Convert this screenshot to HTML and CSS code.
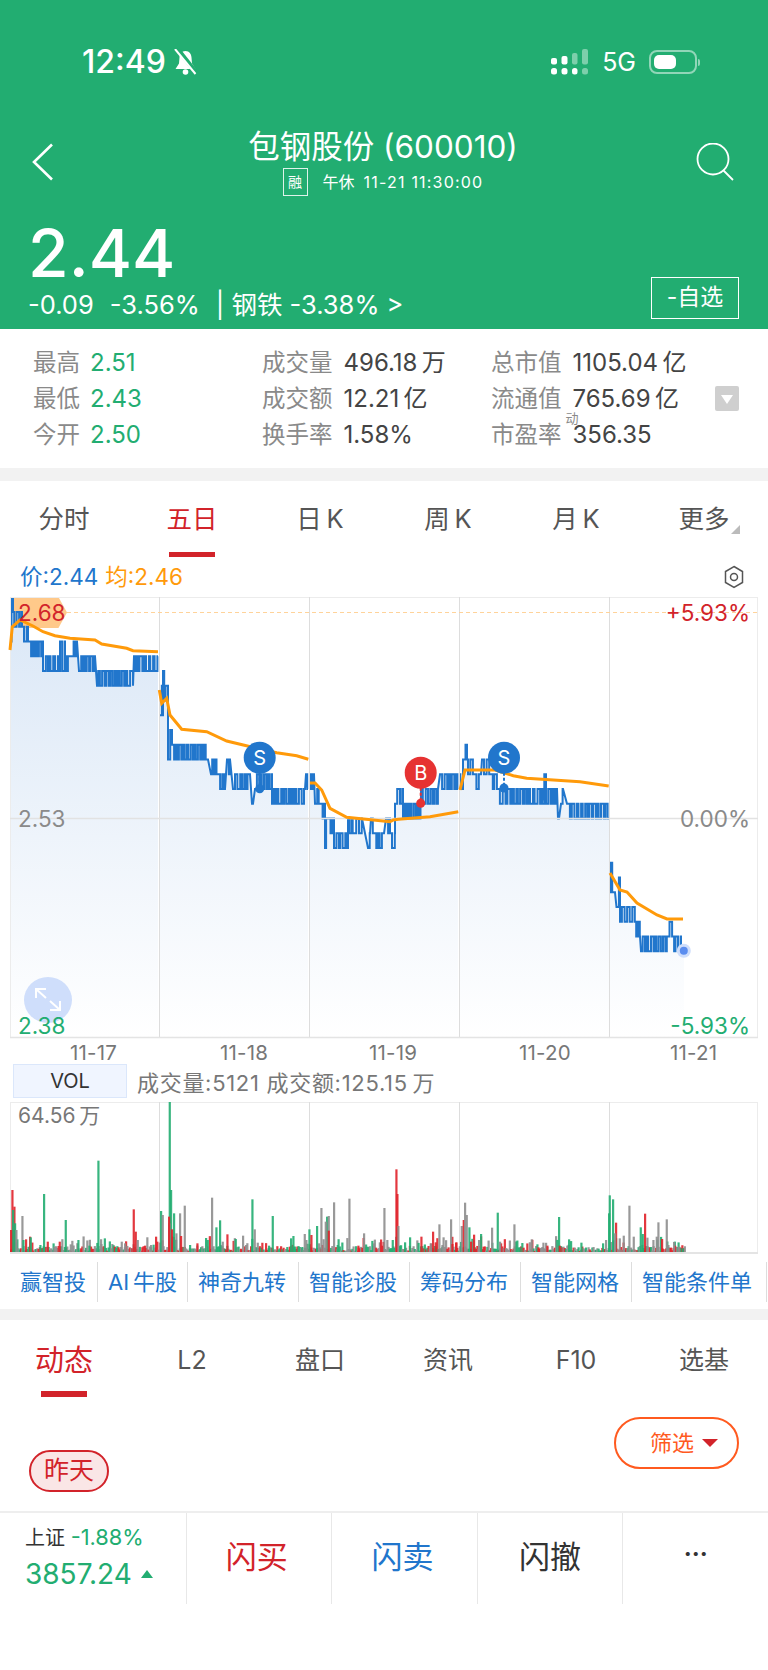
FILE: index.html
```html
<!DOCTYPE html>
<html>
<head>
    <meta charset="UTF-8">
    <title>包钢股份 (600010)</title>
    <link rel="stylesheet" href="styles.css">
</head>
<body>
    <div class="header">
        <div class="status-bar">
            <div class="status-left">
                <span class="clock">12:49</span>
                <svg class="bell" width="23" height="26" viewBox="0 0 23 26">
                    <path d="M11.500 2c-4 0-5.800 3-6 6.500L5 14.500 1.500 20h20L18 14.500l-.5-6C17.300 5 15.500 2 11.500 2z" fill="#fff"/>
                    <circle cx="11.500" cy="23" r="2.800" fill="#fff"/>
                    <path d="M3.500 0l19 24" stroke="#22ad71" stroke-width="4.500"/>
                    <path d="M1 0l20.500 25" stroke="#fff" stroke-width="2"/>
                </svg>
            </div>
            <div class="status-right">
                <svg class="signal" width="37" height="26" viewBox="0 0 37 26">
                    <rect x="0" y="9" width="6" height="6.500" rx="2" fill="#fff"/>
                    <rect x="10.500" y="7" width="6" height="8.500" rx="2" fill="#fff"/>
                    <rect x="21" y="4" width="5.500" height="11.500" rx="2" fill="#7dcfab"/>
                    <rect x="31" y="0" width="6" height="15.500" rx="2" fill="#7dcfab"/>
                    <rect x="0" y="19" width="6" height="6.500" rx="2.500" fill="#fff"/>
                    <rect x="10.500" y="19" width="6" height="6.500" rx="2.500" fill="#fff"/>
                    <rect x="21" y="19" width="5.500" height="6.500" rx="2.500" fill="#fff"/>
                    <rect x="31" y="19" width="6" height="6.500" rx="2.500" fill="#7dcfab"/>
                </svg>
                <span class="net">5G</span>
                <div class="battery"><div class="battery-level"></div></div>
                <div class="battery-tip"></div>
            </div>
        </div>
        <div class="title-bar">
            <svg class="icon-back" width="22" height="38" viewBox="0 0 22 38">
                <path d="M20 1.500L2 19l18 17.500" fill="none" stroke="#fff" stroke-width="2.600"/>
            </svg>
            <div class="title-mid">
                <div class="title">包钢股份 (600010)</div>
                <div class="subtitle">
                    <span class="rong">融</span>
                    <span>午休&nbsp;&nbsp;<span class="stamp">11-21 11:30:00</span></span>
                </div>
            </div>
            <svg class="icon-search" width="38" height="38" viewBox="0 0 38 38">
                <circle cx="17" cy="16" r="15.500" fill="none" stroke="#fff" stroke-width="1.800"/>
                <path d="M27 27l10 10" stroke="#fff" stroke-width="1.800"/>
            </svg>
        </div>
        <div class="quote">
            <div>
                <div class="price">2.44</div>
                <div class="change">
                    <span>-0.09</span>
                    <span>-3.56%</span>
                    <span>| 钢铁 -3.38% &gt;</span>
                </div>
            </div>
            <div class="fav">-自选</div>
        </div>
    </div>

    <div class="stats">
        <div class="stat-col col-a">
            <div class="stat"><span class="label">最高</span><span class="val green">2.51</span></div>
            <div class="stat"><span class="label">最低</span><span class="val green">2.43</span></div>
            <div class="stat"><span class="label">今开</span><span class="val green">2.50</span></div>
        </div>
        <div class="stat-col col-b">
            <div class="stat"><span class="label">成交量</span><span class="val">496.18&thinsp;万</span></div>
            <div class="stat"><span class="label">成交额</span><span class="val">12.21&thinsp;亿</span></div>
            <div class="stat"><span class="label">换手率</span><span class="val">1.58%</span></div>
        </div>
        <div class="stat-col col-c">
            <div class="stat"><span class="label">总市值</span><span class="val">1105.04&thinsp;亿</span></div>
            <div class="stat"><span class="label">流通值</span><span class="val">765.69&thinsp;亿</span></div>
            <div class="stat"><span class="label">市盈率<sup class="dyn">动</sup></span><span class="val">356.35</span></div>
        </div>
        <div class="expand"><span class="expand-arrow"></span></div>
    </div>

    <div class="band"></div>

    <div class="chart-tabs">
        <div class="tab">分时</div>
        <div class="tab active">五日</div>
        <div class="tab">日&thinsp;K</div>
        <div class="tab">周&thinsp;K</div>
        <div class="tab">月&thinsp;K</div>
        <div class="tab more">更多</div>
    </div>

    <div class="legend">
        <span class="blue">价:2.44</span>
        <span class="orange">均:2.46</span>
        <svg class="icon-hex" width="22" height="24" viewBox="0 0 22 24">
            <path d="M11 1.500l8.500 5v11l-8.500 5-8.500-5v-11z" fill="none" stroke="#555" stroke-width="1.500"/>
            <circle cx="11" cy="12" r="3.500" fill="none" stroke="#555" stroke-width="1.500"/>
        </svg>
    </div>

    <div class="chart">
        <svg id="priceChart" width="768" height="444"></svg>
        <div class="hi-tag"></div>
        <span class="axis red hi-left">2.68</span>
        <span class="axis red hi-right">+5.93%</span>
        <span class="axis grey mid-left">2.53</span>
        <span class="axis grey mid-right">0.00%</span>
        <div class="zoom-btn">
            <svg width="28" height="25" viewBox="0 0 28 25">
                <path d="M2 11V2h10M2 2l10 9M26 14v9H16M26 23l-10-9" fill="none" stroke="#fff" stroke-width="2"/>
            </svg>
        </div>
        <span class="axis green lo-left">2.38</span>
        <span class="axis green lo-right">-5.93%</span>
    </div>

    <div class="dates">
        <span>11-17</span>
        <span>11-18</span>
        <span>11-19</span>
        <span>11-20</span>
        <span>11-21</span>
    </div>

    <div class="vol-row">
        <div class="vol-btn">VOL</div>
        <div class="vol-text">成交量:5121 成交额:125.15&thinsp;万</div>
    </div>

    <div class="chart vol-chart">
        <svg id="volChart" width="768" height="152"></svg>
        <span class="vol-max">64.56&thinsp;万</span>
    </div>

    <div class="tools">
        <span>赢智投</span>
        <span>AI&thinsp;牛股</span>
        <span>神奇九转</span>
        <span>智能诊股</span>
        <span>筹码分布</span>
        <span>智能网格</span>
        <span>智能条件单</span>
    </div>

    <div class="band band-small"></div>

    <div class="news-tabs">
        <div class="news-tab active">动态</div>
        <div class="news-tab">L2</div>
        <div class="news-tab">盘口</div>
        <div class="news-tab">资讯</div>
        <div class="news-tab">F10</div>
        <div class="news-tab">选基</div>
    </div>

    <div class="feed">
        <div class="yesterday">昨天</div>
        <div class="filter">筛选<span class="filter-arrow"></span></div>
    </div>

    <div class="bottom-bar">
        <div class="index-cell">
            <div class="index-top"><span>上证</span> <span class="index-pct green">-1.88%</span></div>
            <div class="index-val green">3857.24<span class="up-arrow"></span></div>
        </div>
        <div class="action red">闪买</div>
        <div class="action blue">闪卖</div>
        <div class="action">闪撤</div>
        <div class="action dots">···</div>
    </div>

    <script src="chart.js"></script>
</body>
</html>
```

FILE: styles.css
```css
:root {
    --green: #22ad71;
    --red: #d2232a;
    --blue: #2176cc;
    --orange: #ff9a0a;
    --band: #f2f2f2;
    --label: #8a8a8a;
    --text: #444;
}

* {
    box-sizing: border-box;
    margin: 0;
    padding: 0;
}

body {
    width: 768px;
    height: 1670px;
    overflow: hidden;
    background: #fff;
    color: var(--text);
    font-family: Inter, "Noto Sans CJK SC", sans-serif;
}

.green { color: var(--green); }
.red { color: var(--red); }
.blue { color: var(--blue); }
.orange { color: var(--orange); }
.grey { color: #8a8a8a; }

/* header */
.header {
    height: 329px;
    background: var(--green);
    color: #fff;
    padding-top: 45px;
}

.status-bar {
    display: flex;
    justify-content: space-between;
    align-items: center;
    height: 34px;
    padding: 0 68px 0 82px;
}

.status-left {
    display: flex;
    align-items: center;
    gap: 8px;
}

.clock {
    font-size: 32px;
    font-weight: 500;
    line-height: 34px;
}

.status-right {
    display: flex;
    align-items: center;
}

.signal {
    margin-right: 14px;
}

.net {
    font-size: 25px;
    margin-right: 13px;
}

.battery {
    width: 48px;
    height: 24px;
    border: 2px solid rgba(255,255,255,0.5);
    border-radius: 8px;
    padding: 3px;
}

.battery-level {
    width: 22px;
    height: 100%;
    background: #fff;
    border-radius: 5px;
}

.battery-tip {
    width: 2px;
    height: 7px;
    margin-left: 1px;
    background: rgba(255,255,255,0.5);
    border-radius: 0 2px 2px 0;
}

.title-bar {
    display: flex;
    justify-content: space-between;
    align-items: flex-start;
    margin-top: 50px;
    padding: 14px 34px 0 32px;
    height: 71px;
}

.icon-back {
    margin-right: 16px;
}

.title-mid {
    width: 400px;
    margin-top: -14px;
    text-align: center;
}

.title {
    font-size: 31.500px;
    line-height: 36px;
}

.subtitle {
    display: flex;
    justify-content: center;
    align-items: center;
    gap: 15px;
    margin-top: 3px;
    font-size: 16px;
    line-height: 28px;
}

.stamp {
    letter-spacing: 1.200px;
}

.rong {
    width: 25px;
    height: 28px;
    line-height: 26px;
    border: 1px solid rgba(255,255,255,0.85);
    font-size: 14px;
    text-align: center;
}

.quote {
    display: flex;
    justify-content: space-between;
    align-items: flex-end;
    height: 129px;
    padding: 0 29px 10px 28px;
}

.price {
    font-size: 66px;
    font-weight: 500;
    line-height: 60px;
}

.change {
    display: flex;
    gap: 16px;
    font-size: 25.500px;
    line-height: 28px;
    margin-top: 8px;
    white-space: nowrap;
}

.fav {
    width: 88px;
    height: 42px;
    line-height: 38px;
    border: 1px solid #fff;
    text-align: center;
    font-size: 23px;
}

/* stats */
.stats {
    display: flex;
    position: relative;
    height: 139px;
    padding: 16px 0 0 33px;
    font-size: 23.500px;
}

.stat-col {
    display: flex;
    flex-direction: column;
}

.col-a { width: 229px; }
.col-b { width: 229px; }

.stat {
    display: flex;
    height: 36px;
    line-height: 36px;
    white-space: nowrap;
}

.label {
    color: var(--label);
    position: relative;
}

.val {
    margin-left: 10px;
    font-size: 24px;
}

.col-b .val { margin-left: 11px; }
.col-c .val { margin-left: 11px; }

.dyn {
    position: absolute;
    top: -7px;
    right: -17px;
    font-size: 13px;
    line-height: 16px;
}

.expand {
    position: absolute;
    left: 715px;
    top: 57px;
    width: 24px;
    height: 25px;
    background: #cfcfcf;
    border-radius: 2px;
}

.expand-arrow {
    display: block;
    width: 0;
    margin: 9px auto 0;
    border-left: 6px solid transparent;
    border-right: 6px solid transparent;
    border-top: 9px solid #fff;
}

.band {
    height: 13px;
    background: var(--band);
}

.band-small {
    height: 11px;
}

/* chart tabs */
.chart-tabs {
    display: flex;
    height: 76px;
}

.tab {
    width: 128px;
    height: 76px;
    padding-top: 20px;
    text-align: center;
    font-size: 25.500px;
    line-height: 36px;
    color: #555;
    position: relative;
}

.tab.active {
    color: var(--red);
}

.tab.active::after {
    content: "";
    position: absolute;
    left: 41px;
    bottom: 0;
    width: 46px;
    height: 5px;
    background: var(--red);
}

.tab.more::after {
    content: "";
    position: absolute;
    right: 28px;
    bottom: 23px;
    border-left: 9px solid transparent;
    border-bottom: 9px solid #bbb;
}

.legend {
    display: flex;
    align-items: center;
    height: 40px;
    gap: 7px;
    padding: 0 23px 4px 20px;
    font-size: 22.500px;
}

.icon-hex {
    margin-left: auto;
    margin-top: 4px;
}

/* charts */
.chart {
    position: relative;
    height: 444px;
}

.chart svg {
    display: block;
}

.axis {
    position: absolute;
    font-size: 22.500px;
    line-height: 24px;
}

.hi-tag {
    position: absolute;
    left: 10px;
    top: 0;
    width: 57px;
    height: 31px;
    background: #ffc98a;
    clip-path: polygon(0 0, 85% 0, 100% 50%, 85% 100%, 0 100%);
    z-index: -1;
}

.hi-left { left: 18px; top: 4px; }
.hi-right { right: 18px; top: 4px; }
.mid-left { left: 18px; top: 210px; }
.mid-right { right: 18px; top: 210px; }
.lo-left { left: 18px; top: 417px; }
.lo-right { right: 18px; top: 417px; }

.zoom-btn {
    position: absolute;
    left: 24px;
    top: 380px;
    width: 48px;
    height: 46px;
    padding: 10px 0 0 10px;
    border-radius: 50%;
    background: #cfdefb;
}

.zoom-btn svg {
    display: block;
}

.dates {
    position: relative;
    height: 23px;
    font-size: 20.500px;
    line-height: 24px;
    letter-spacing: 0.2px;
    color: #777;
}

.dates span {
    position: absolute;
    top: 0;
}

.dates span:nth-child(1) { left: 70px; }
.dates span:nth-child(2) { left: 220px; }
.dates span:nth-child(3) { left: 369px; }
.dates span:nth-child(4) { left: 519px; }
.dates span:nth-child(5) { left: 670px; }

.vol-row {
    display: flex;
    align-items: center;
    height: 38px;
    padding: 0 0 4px 13px;
    gap: 10px;
}

.vol-btn {
    width: 114px;
    height: 34px;
    line-height: 32px;
    background: #f0f5ff;
    border: 1px solid #dbe7fb;
    color: #333;
    text-align: center;
    font-size: 20px;
}

.vol-text {
    font-size: 22px;
    letter-spacing: 0.7px;
    color: #777;
    white-space: nowrap;
}

.vol-chart {
    height: 152px;
}

.vol-max {
    position: absolute;
    left: 18px;
    top: 2px;
    font-size: 21px;
    line-height: 24px;
    color: #777;
}

/* tool links */
.tools {
    display: flex;
    align-items: center;
    height: 55px;
    font-size: 22px;
    color: var(--blue);
    white-space: nowrap;
}

.tools span {
    height: 40px;
    line-height: 40px;
    border-right: 1px solid #ddd;
    padding: 0 10px;
    flex: none;
}

.tools span:first-child {
    width: 98px;
    padding-left: 20px;
}

.tools span:nth-child(2) {
    width: 90px;
}

.tools span:nth-child(n+3) {
    width: 111px;
}

.tools span:last-child {
    width: 135px;
}

/* lower tabs */
.news-tabs {
    display: flex;
    height: 77px;
}

.news-tab {
    width: 128px;
    height: 77px;
    padding-top: 22px;
    text-align: center;
    font-size: 25px;
    line-height: 36px;
    color: #555;
    position: relative;
}

.news-tab.active {
    padding-top: 23px;
    font-size: 29px;
    color: var(--red);
}

.news-tab.active::after {
    content: "";
    position: absolute;
    left: 41px;
    bottom: 0;
    width: 46px;
    height: 6px;
    background: var(--red);
}

.feed {
    position: relative;
    height: 114px;
}

.yesterday {
    position: absolute;
    left: 29px;
    top: 53px;
    width: 80px;
    height: 42px;
    line-height: 37px;
    border: 2px solid var(--red);
    border-radius: 21px;
    background: #fae6e6;
    color: var(--red);
    text-align: center;
    font-size: 25px;
}

.filter {
    position: absolute;
    left: 614px;
    top: 20px;
    width: 125px;
    height: 52px;
    padding-left: 34px;
    line-height: 48px;
    border: 2px solid #ff5a1f;
    border-radius: 26px;
    color: #ff5a1f;
    font-size: 22px;
}

.filter-arrow {
    display: inline-block;
    margin-left: 8px;
    vertical-align: 4px;
    border-left: 8px solid transparent;
    border-right: 8px solid transparent;
    border-top: 8px solid var(--red);
}

/* bottom bar */
.bottom-bar {
    display: flex;
    height: 93px;
    border-top: 2px solid #eee;
}

.index-cell {
    width: 187px;
    padding: 9px 0 0 25px;
    border-right: 1px solid #e8e8e8;
}

.index-top {
    font-size: 20px;
    line-height: 30px;
    color: #333;
    white-space: nowrap;
}

.index-pct {
    font-size: 21.800px;
}

.index-val {
    display: flex;
    align-items: center;
    gap: 9px;
    font-size: 28px;
    line-height: 38px;
    margin-top: 2px;
}

.up-arrow {
    border-left: 6px solid transparent;
    border-right: 6px solid transparent;
    border-bottom: 8px solid var(--green);
}

.action {
    width: 146px;
    border-right: 1px solid #e8e8e8;
    text-align: center;
    font-size: 31px;
    line-height: 88px;
    color: #333;
}

.action.red,
.action.blue {
    padding-right: 4px;
    color: var(--red);
}

.action.blue { color: var(--blue); }

.action.dots {
    width: 145px;
    border-right: none;
    font-size: 24px;
    font-weight: bold;
    line-height: 82px;
}
```

FILE: chart.js
```js
// page coordinates of each chart's top-left corner
var CHART_TOP = 597, VOL_TOP = 1102;
var SVG_NS = 'http://www.w3.org/2000/svg';

var seed = 17;
function rnd() {
    seed = (seed * 16807) % 2147483647;
    return seed / 2147483647;
}

function el(parent, tag, attrs) {
    var n = document.createElementNS(SVG_NS, tag);
    for (var k in attrs) n.setAttribute(k, attrs[k]);
    parent.appendChild(n);
    return n;
}

function level(k) {
    return 612 + k * 14.75 - CHART_TOP;
}

// [x0, x1, upper level, lower level]
var days = [
    [[10,13,-1,2],[13,22,0,1],[22,30,1,2],[30,43,2,3],[43,60,3,4],[60,65,2,4],[65,70,3,4],[71,77,2,3],[79,95,3,4],[97,133,4,5],[134,140,3,4],[140,158,3,4]],
    [[160,163,5,7],[163,165.5,4,6],[165.5,168,5,7],[168,172,8,10],[172,208,9,10],[211,218,10,11],[218,225,11,12],[227,230,10,11],[233,250,11,12],[252,253,12,13],[255,272,11,12],[272,305,12,13],[306,308,11,12]],
    [[309,314,11,12],[315,320,12,13],[320,325,13,14],[325,328,14,16],[328,334,14,15],[334,348,15,16],[348,353,14,15],[355,362,14,15],[368,370,15,16],[371,374,14,15],[375,384,15,16],[386,390,14,15],[390,395,15,16],[395,403,12,13],[403,421,13,14],[421,438,12,13],[440,458,11,12]],
    [[459,463,11,12],[463,468,9,10],[468,473,10,11],[474,481,11,12],[482,490,10,11],[490,497,11,12],[497,512,12,13],[512,543,12,13],[542,546,11,13],[546,557,12,13],[558,559,13,14],[561,563,12,13],[567,609,13,14]],
    [[609,612.5,17,19],[612.5,615,19,21],[616.5,620,18,20],[620,635,20,21],[635,640,21,22],[641,667,22,23],[667,672.5,21,22],[672.5,681,22,23],[681,684,23,23]]
];

var averages = [
    [[10,650],[12.3,626.7],[20,620],[33,626],[43,631.7],[55,635.7],[70,638.3],[95,640],[101.7,644],[126.7,648.3],[133,650.7],[158,651.7]],
    [[159.3,690],[161.7,703.3],[166.7,698.3],[170,715],[181.7,729.3],[206.7,731.7],[226.7,741],[243.3,745],[276.7,752.7],[296.7,755.7],[308.3,759.3]],
    [[310,783],[315,783],[321.7,790],[330,808.3],[346.7,817.3],[390,821.7],[393.3,820],[398.3,819.3],[430,816.7],[458.3,811.7]],
    [[460,790],[465,770],[480,770],[495,770],[513.3,775.7],[526.7,778.3],[580,781.7],[608.7,786]],
    [[610,873],[620,890],[627,892],[637,903],[657,915],[667,919],[683,919]]
];

function drawPrice() {
    var svg = document.getElementById('priceChart');
    var defs = el(svg, 'defs', {});
    var grad = el(defs, 'linearGradient', { id: 'areaFill', gradientUnits: 'userSpaceOnUse', x1: 0, y1: 40, x2: 0, y2: 441 });
    el(grad, 'stop', { offset: '0%', 'stop-color': '#dde9f7' });
    el(grad, 'stop', { offset: '100%', 'stop-color': '#ffffff' });

    days.forEach(function (segs) {
        var d = '', startX = segs[0][0], endX = segs[segs.length - 1][1];
        segs.forEach(function (s) {
            var up = rnd() > 0.5, x = s[0];
            while (x < s[1]) {
                var y = level(up ? s[2] : s[3]);
                d += (d ? 'L' : 'M') + x.toFixed(1) + ' ' + y.toFixed(1);
                x += 1.1 + rnd() * 1.8;
                d += 'L' + Math.min(x, s[1]).toFixed(1) + ' ' + y.toFixed(1);
                up = !up;
            }
        });
        el(svg, 'path', { d: d + 'L' + endX + ' 441L' + startX + ' 441Z', fill: 'url(#areaFill)' });
        el(svg, 'path', { d: d, fill: 'none', stroke: '#2176cc', 'stroke-width': 2 });
    });

    // frame and grid
    el(svg, 'rect', { x: 10.5, y: 0.5, width: 747, height: 440, fill: 'none', stroke: '#ececec' });
    [159, 309, 459, 609].forEach(function (x) {
        el(svg, 'path', { d: 'M' + (x + 0.5) + ' 0V441', stroke: '#dddddd' });
    });
    el(svg, 'path', { d: 'M10 221.500H758', stroke: '#e2e2e2', 'stroke-width': 1.5 });
    el(svg, 'path', { d: 'M10 440.500H758', stroke: '#e4e4e4', 'stroke-width': 1.5 });
    el(svg, 'path', { d: 'M67 15.500H758', stroke: '#ffd39a', 'stroke-dasharray': '4 3' });

    averages.forEach(function (line) {
        var pts = line.map(function (p) { return p[0] + ',' + (p[1] - CHART_TOP); }).join(' ');
        el(svg, 'polyline', { points: pts, fill: 'none', stroke: '#ff9a0a', 'stroke-width': 3 });
    });

    marker(svg, 259.7, 160.7, 191.7, '#2176cc', 'S');
    marker(svg, 420.7, 175.7, 206.3, '#e63232', 'B');
    marker(svg, 504, 160.7, 191, '#2176cc', 'S');

    el(svg, 'circle', { cx: 683.8, cy: 353.7, r: 7, fill: '#cfdefb' });
    el(svg, 'circle', { cx: 683.8, cy: 353.7, r: 4, fill: '#5b8def' });
}

function marker(svg, x, cy, dotY, color, letter) {
    el(svg, 'path', { d: 'M' + x + ' ' + cy + 'V' + dotY, stroke: color, 'stroke-width': 2, 'stroke-dasharray': '3 2' });
    el(svg, 'circle', { cx: x, cy: dotY, r: 4.5, fill: color });
    el(svg, 'circle', { cx: x, cy: cy, r: 16, fill: color });
    var t = el(svg, 'text', { x: x, y: cy + 7, fill: '#fff', 'font-size': 20, 'text-anchor': 'middle', 'font-family': 'Inter' });
    t.textContent = letter;
}

// zoomed-in readings of the tall bars: [x, top, colour]
var barsA = [[34,300,'r'],[40,350,'r'],[36,360,'g'],[42,400,'g'],[46,420,'k'],[30,420,'r'],[64,378,'k'],[75,448,'r'],[67,450,'g'],[87,440,'r'],[89,442,'g'],[129,312,'g'],[140,455,'r'],[118,465,'g'],[160,470,'k'],[176,455,'r'],[194,390,'g'],[209,463,'k'],[232,450,'g'],[265,467,'g'],[292,212,'g'],[301,462,'k'],[362,455,'k'],[372,460,'k'],[398,358,'r'],[404,425,'r'],[410,450,'k'],[432,467,'r'],[450,465,'k'],[465,440,'r'],[480,363,'g'],[485,375,'k'],[506,36,'g'],[510,300,'g'],[505,400,'k'],[504,380,'r'],[513,418,'r'],[519,370,'g'],[526,430,'k'],[537,370,'k'],[540,438,'r'],[551,347,'k'],[567,465,'g'],[589,460,'r'],[620,450,'g'],[633,323,'k'],[646,412,'g'],[657,391,'g'],[665,455,'k'],[679,433,'r'],[704,447,'g'],[726,437,'k'],[735,465,'k'],[754,328,'g'],[761,418,'k'],[770,458,'k'],[815,378,'g'],[804,467,'g'],[870,445,'g'],[877,438,'g'],[911,432,'k'],[925,418,'g'],[931,435,'r'],[916,450,'k'],[948,408,'g'],[961,354,'k'],[954,460,'k'],[978,380,'g'],[983,378,'k'],[983,422,'r'],[974,395,'k'],[999,337,'k'],[1010,465,'g'],[1045,326,'k'],[1089,430,'k'],[1072,467,'r'],[1119,460,'k'],[1150,354,'k']];
var barsB = [[23,450,'g'],[34,238,'r'],[37,312,'r'],[40,408,'k'],[45,467,'g'],[60,457,'g'],[75,442,'g'],[109,440,'r'],[137,460,'k'],[144,425,'r'],[152,457,'r'],[163,403,'k'],[172,465,'k'],[198,388,'k'],[202,462,'r'],[214,457,'r'],[230,408,'k'],[236,390,'r'],[240,338,'k'],[245,375,'k'],[253,412,'g'],[258,455,'r'],[267,434,'r'],[288,432,'g'],[282,450,'k'],[321,413,'k'],[338,368,'g'],[348,460,'r'],[345,455,'k'],[388,403,'k'],[404,472,'g'],[440,448,'k'],[457,463,'g'],[460,472,'r'],[475,458,'k'],[487,467,'r'],[522,381,'g'],[524,467,'r'],[552,448,'g'],[589,458,'g'],[654,460,'g'],[663,450,'k'],[674,316,'g'],[672,370,'g'],[684,328,'g'],[693,398,'r'],[690,430,'k'],[704,445,'k'],[716,437,'k'],[733,347,'k'],[746,440,'k'],[767,412,'g'],[773,432,'g'],[780,371,'r'],[787,443,'k'],[805,450,'k'],[820,397,'k'],[831,447,'r'],[815,440,'k'],[845,388,'k'],[850,465,'k'],[870,467,'r'],[867,456,'k'],[882,470,'k'],[893,475,'g']];
var BAR_COLOR = { r: '#e0222a', g: '#22ad71', k: '#8e8e8e' };

function drawVolume() {
    var svg = document.getElementById('volChart');
    el(svg, 'rect', { x: 10.5, y: 0.5, width: 747, height: 151, fill: 'none', stroke: '#ececec' });
    [159, 309, 459, 609].forEach(function (x) {
        el(svg, 'path', { d: 'M' + (x + 0.5) + ' 0V151', stroke: '#dddddd' });
    });

    function bar(x, h, c) {
        el(svg, 'rect', { x: x, y: 151 - h, width: 2.2, height: h, fill: BAR_COLOR[c], opacity: 0.9 });
    }

    // low background volume
    var colours = 'rgkkkgr';
    for (var x = 10; x < 684; x += 1.25) {
        var tall = rnd() > 0.75;
        bar(x, 2 + rnd() * (tall ? 15 : 5), colours[Math.floor(rnd() * 7)]);
    }

    barsA.forEach(function (b) { bar(b[0] / 3, 151 - (1090 + b[1] / 3 - VOL_TOP), b[2]); });
    barsB.forEach(function (b) { bar(384 + b[0] / 3, 151 - (1090 + b[1] / 3 - VOL_TOP), b[2]); });

    el(svg, 'path', { d: 'M10 151H758', stroke: '#e4e4e4', 'stroke-width': 2 });
}

drawPrice();
drawVolume();
```
